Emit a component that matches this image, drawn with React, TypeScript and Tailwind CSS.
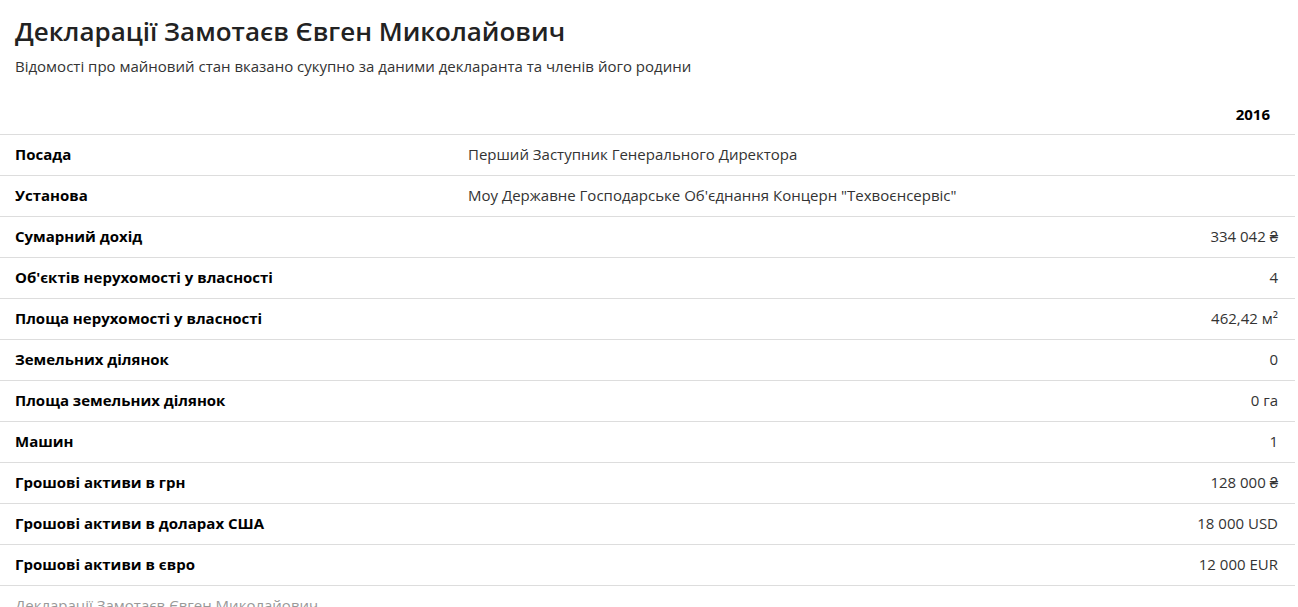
import React from "react";

type Row = { label: string; value: string; align: "left" | "right" };

const rows: Row[] = [
  { label: "Посада", value: "Перший Заступник Генерального Директора", align: "left" },
  { label: "Установа", value: "Моу Державне Господарське Об'єднання Концерн \"Техвоєнсервіс\"", align: "left" },
  { label: "Сумарний дохід", value: "334 042 ₴", align: "right" },
  { label: "Об'єктів нерухомості у власності", value: "4", align: "right" },
  { label: "Площа нерухомості у власності", value: "462,42 м²", align: "right" },
  { label: "Земельних ділянок", value: "0", align: "right" },
  { label: "Площа земельних ділянок", value: "0 га", align: "right" },
  { label: "Машин", value: "1", align: "right" },
  { label: "Грошові активи в грн", value: "128 000 ₴", align: "right" },
  { label: "Грошові активи в доларах США", value: "18 000 USD", align: "right" },
  { label: "Грошові активи в євро", value: "12 000 EUR", align: "right" },
];

export default function App() {
  return (
    <div className="h-[607px] overflow-hidden bg-white font-['Open_Sans',sans-serif] text-[#333]">
      <div className="px-[15px] pt-[13px]">
        <h1 className="text-[26px] font-semibold leading-[36px] text-[#222]">
          Декларації Замотаєв Євген Миколайович
        </h1>
        <p className="mt-[7px] text-[15px] leading-[20px]">
          Відомості про майновий стан вказано сукупно за даними декларанта та членів його родини
        </p>
      </div>

      <table className="mt-[18px] w-[1295px] border-collapse text-[15px]">
        <thead>
          <tr>
            <th className="w-[453px]" />
            <th className="h-[40px] pr-[25px] text-right font-bold text-black">2016</th>
          </tr>
        </thead>
        <tbody>
          {rows.map((r) => (
            <tr key={r.label} className="h-[41px] border-t border-[#ddd]">
              <td className="pl-[15px] font-bold text-black">{r.label}</td>
              <td className={r.align === "right" ? "pr-[17px] text-right" : "pl-[15px] text-left"}>
                {r.value}
              </td>
            </tr>
          ))}
          <tr className="border-t border-[#ddd]">
            <td colSpan={2} />
          </tr>
        </tbody>
      </table>

      <p className="px-[15px] pt-[8px] text-[15px] text-[#999]">
        Декларації Замотаєв Євген Миколайович
      </p>
    </div>
  );
}
